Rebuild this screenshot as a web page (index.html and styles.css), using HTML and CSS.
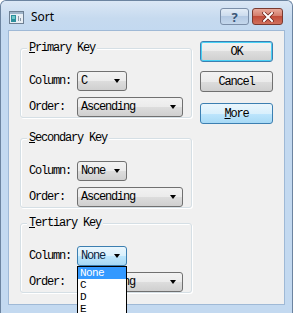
FILE: index.html
```html
<!DOCTYPE html>
<html lang="en">
<head>
    <meta charset="UTF-8">
    <title>Sort</title>
    <link rel="stylesheet" href="styles.css">
</head>
<body>
    <div class="window">
        <div class="titlebar">
            <svg class="app-icon" width="15" height="13" viewBox="0 0 15 13">
                <rect x="0.5" y="0.5" width="14" height="12" fill="#e8eef4" stroke="#6d7f92"/>
                <rect x="1" y="1" width="13" height="2" fill="#9fb4c9"/>
                <rect x="2" y="4" width="5" height="7" fill="#2c8f9c"/>
                <rect x="3" y="5" width="3" height="3" fill="#6fc7c9"/>
                <rect x="9" y="5" width="1" height="5" fill="#8a98a8"/>
                <rect x="11" y="7" width="1" height="3" fill="#8a98a8"/>
            </svg>
            <span class="title">Sort</span>
            <div class="caption-buttons">
                <span class="cap-btn help">?</span>
                <span class="cap-btn close">
                    <svg width="12" height="10" viewBox="0 0 12 10">
                        <path d="M2 1 L10 9 M10 1 L2 9" stroke="#6b1f18" stroke-width="3.4" stroke-linecap="square"/>
                        <path d="M2 1 L10 9 M10 1 L2 9" stroke="#fff" stroke-width="2" stroke-linecap="square"/>
                    </svg>
                </span>
            </div>
        </div>
        <div class="frame">
            <div class="client">
                <div class="keys">
                    <div class="group">
                        <span class="group-title"><u>P</u>rimary Key</span>
                        <div class="row first">
                            <span class="label">Column:</span>
                            <div class="combo narrow">C<i class="arrow"></i></div>
                        </div>
                        <div class="row">
                            <span class="label">Order:</span>
                            <div class="combo wide">Ascending<i class="arrow"></i></div>
                        </div>
                    </div>

                    <div class="group second">
                        <span class="group-title"><u>S</u>econdary Key</span>
                        <div class="row first">
                            <span class="label">Column:</span>
                            <div class="combo narrow">None<i class="arrow"></i></div>
                        </div>
                        <div class="row">
                            <span class="label">Order:</span>
                            <div class="combo wide">Ascending<i class="arrow"></i></div>
                        </div>
                    </div>

                    <div class="group third">
                        <span class="group-title"><u>T</u>ertiary Key</span>
                        <div class="row first">
                            <span class="label">Column:</span>
                            <div class="combo narrow focused">None<i class="arrow"></i>
                                <ul class="dropdown">
                                    <li class="selected">None</li>
                                    <li>C</li>
                                    <li>D</li>
                                    <li>E</li>
                                    <li>F</li>
                                </ul>
                            </div>
                        </div>
                        <div class="row">
                            <span class="label">Order:</span>
                            <div class="combo wide">Ascending<i class="arrow"></i></div>
                        </div>
                    </div>
                </div>

                <div class="buttons">
                    <button class="btn default">OK</button>
                    <button class="btn">Cancel</button>
                    <button class="btn hot"><u>M</u>ore</button>
                </div>
            </div>
        </div>
    </div>
</body>
</html>
```

FILE: styles.css
```css
html, body {
    margin: 0;
    padding: 0;
    background: #fff;
}
.window {
    width: 293px;
    height: 313px;
    box-sizing: border-box;
    border: 1px solid #6c84a0;
    border-bottom: none;
    border-radius: 6px 6px 0 0;
    background: #c3d9f0;
    font-family: "Liberation Mono", monospace;
    font-size: 12px;
    letter-spacing: -1.2px;
    color: #000;
    overflow: hidden;
}
.titlebar {
    height: 29px;
    display: flex;
    align-items: center;
    padding: 0 9px 0 8px;
    background: linear-gradient(#dbe7f5, #c6daef 60%, #c3d9f0);
    border-radius: 5px 5px 0 0;
}
.app-icon {
    margin-top: 3px;
}
.title {
    margin-left: 7px;
    margin-top: 2px;
    font-family: "Noto Sans", sans-serif;
    font-size: 12px;
    letter-spacing: 0;
    color: #000;
}
.caption-buttons {
    margin-left: auto;
    margin-top: 2px;
    display: flex;
    gap: 3px;
}
.cap-btn {
    height: 17px;
    box-sizing: border-box;
    border: 1px solid #7b8ea8;
    border-radius: 3px;
    display: flex;
    align-items: center;
    justify-content: center;
}
.help {
    width: 29px;
    background: linear-gradient(#e3ecf6, #cddcee 45%, #b4c9e3 50%, #c4d7ec);
    font-family: "Noto Sans", sans-serif;
    font-size: 13px;
    font-weight: bold;
    letter-spacing: 0;
    color: #3b5677;
}
.close {
    width: 31px;
    border-color: #7a3a30;
    background: linear-gradient(#e9a99b, #d47e6d 45%, #c24c3a 50%, #d0705c);
}
.frame {
    padding: 0 7px 7px 7px;
}
.client {
    height: 275px;
    box-sizing: border-box;
    border: 1px solid #9fb9d6;
    background: #f0f0f0;
    display: flex;
    padding: 10px 11px 0 11px;
}
.keys {
    width: 172px;
    padding-top: 7px;
}
.group {
    border: 1px solid #d5dfe5;
    border-radius: 3px;
    box-shadow: inset 1px 1px 0 #fff, 1px 1px 0 #fff;
    padding: 0 0 7px 8px;
    height: 70px;
    box-sizing: border-box;
}
.second {
    margin-top: 20px;
}
.third {
    margin-top: 15px;
}
.group-title {
    display: inline-block;
    height: 12px;
    line-height: 12px;
    margin: -7px 0 0 -2px;
    padding: 0 2px;
    background: #f0f0f0;
    vertical-align: top;
}
.row {
    display: flex;
    align-items: center;
    margin-top: 6px;
}
.row.first {
    margin-top: 8px;
}
.label {
    width: 48px;
}
.combo {
    position: relative;
    height: 20px;
    box-sizing: border-box;
    border: 1px solid #707070;
    border-radius: 3px;
    background: linear-gradient(#f2f2f2, #ebebeb 50%, #dddddd 50%, #cfcfcf);
    display: flex;
    align-items: center;
    padding-left: 3px;
}
.narrow {
    width: 50px;
}
.wide {
    width: 106px;
}
.focused {
    border-color: #3c7fb1;
    background: linear-gradient(#eaf6fd, #d9f0fc 50%, #bee6fd 50%, #a7d9f5);
    color: #0a2440;
}
.arrow {
    margin-left: auto;
    margin-right: 6px;
    width: 0;
    height: 0;
    border-left: 3.5px solid transparent;
    border-right: 3.5px solid transparent;
    border-top: 4px solid #000;
}
.dropdown {
    position: absolute;
    z-index: 10;
    left: -1px;
    top: 19px;
    width: 50px;
    margin: 0;
    padding: 0;
    list-style: none;
    background: #fff;
    border: 1px solid #000;
    box-sizing: border-box;
    color: #000;
    font-size: 11px;
    letter-spacing: -0.6px;
}
.dropdown li {
    height: 12px;
    line-height: 12px;
    padding-left: 2px;
}
.dropdown li.selected {
    background: #3399ff;
    color: #fff;
}
.buttons {
    margin-left: 8px;
    display: flex;
    flex-direction: column;
}
.btn {
    width: 73px;
    height: 21px;
    margin: 0 0 9px 0;
    padding: 0;
    box-sizing: border-box;
    border: 1px solid #707070;
    border-radius: 3px;
    background: linear-gradient(#f2f2f2, #ebebeb 50%, #dddddd 50%, #cfcfcf);
    font-family: "Liberation Mono", monospace;
    font-size: 12px;
    letter-spacing: -1.2px;
    color: #000;
}
.btn.default {
    border-color: #3c7fb1;
    box-shadow: inset 0 0 0 1px #48d1f5;
}
.btn.hot {
    margin-top: 2px;
    border-color: #3c7fb1;
    background: linear-gradient(#eaf6fd, #d9f0fc 50%, #bee6fd 50%, #a7d9f5);
}
```
